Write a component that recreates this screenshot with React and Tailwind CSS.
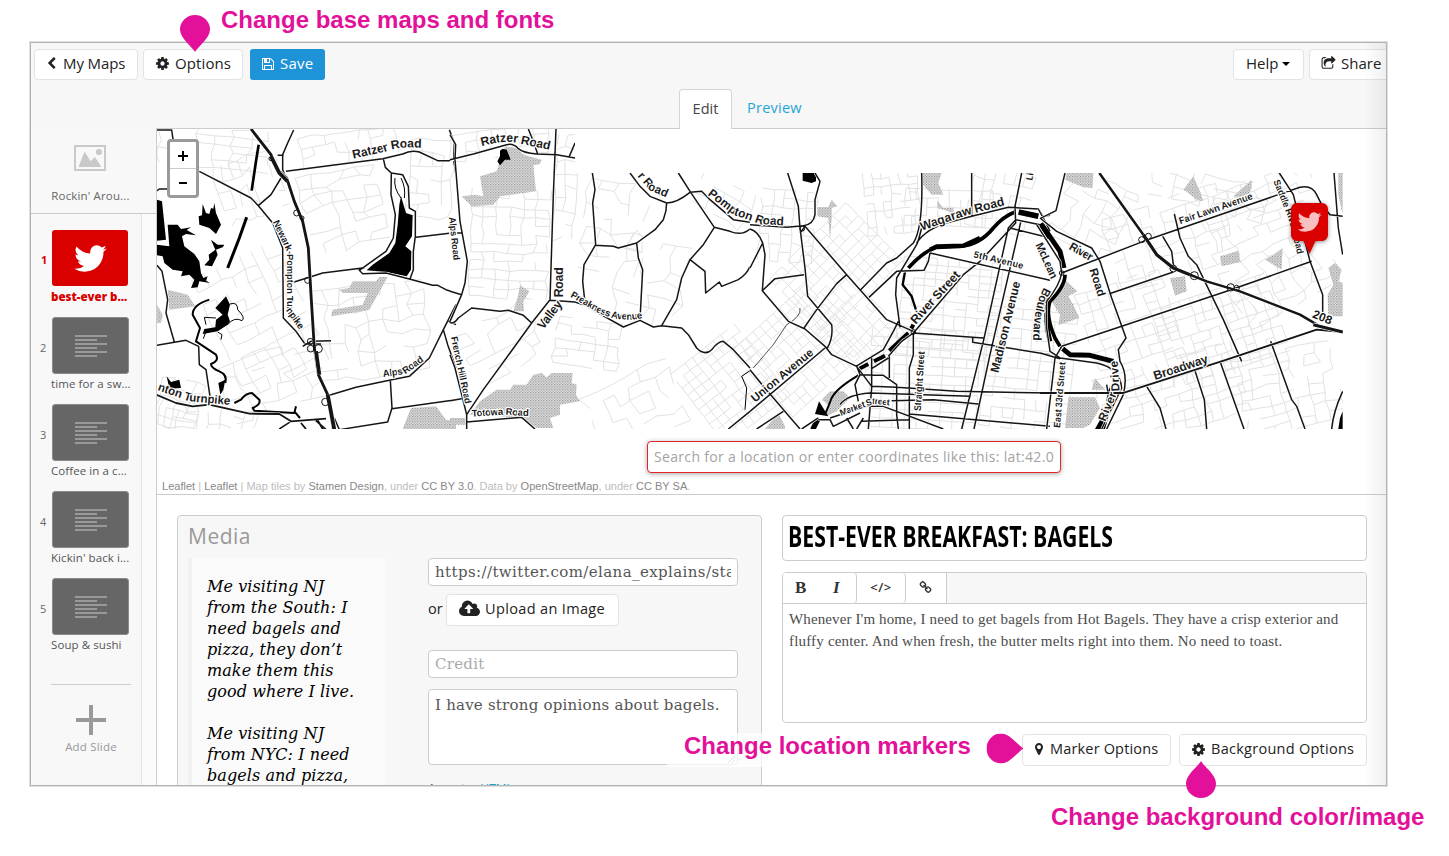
import React from "react";

const ICONS = {
  cog: "M1152 896q0-106-75-181t-181-75-181 75-75 181 75 181 181 75 181-75 75-181zm512-109v222q0 12-8 23t-20 13l-185 28q-19 54-39 91 35 50 107 138 10 12 10 25t-9 23q-27 37-99 108t-94 71q-12 0-26-9l-138-108q-44 23-91 38-16 136-29 186-7 28-36 28h-222q-14 0-24.500-8.500t-11.500-21.500l-28-184q-49-16-90-37l-141 107q-10 9-25 9-14 0-25-11-126-114-165-168-7-10-7-23 0-12 8-23 15-21 51-66.500t54-70.500q-27-50-41-99l-183-27q-13-2-21-12.500t-8-23.500v-222q0-12 8-23t19-13l186-28q14-46 39-92-40-57-107-138-10-12-10-24 0-10 9-23 26-36 98.500-107.500t94.500-71.500q13 0 26 10l138 107q44-23 91-38 16-136 29-186 7-28 36-28h222q14 0 24.500 8.500t11.500 21.500l28 184q49 16 90 37l142-107q9-9 24-9 13 0 25 10 129 119 165 170 7 8 7 22 0 12-8 23-15 21-51 66.500t-54 70.500q26 50 41 98l183 28q13 2 21 12.500t8 23.500z",
  save: "M512 1536h768v-384h-768v384zm896 0h128v-896q0-14-10-38.500t-20-34.500l-281-281q-10-10-34-20t-39-10v416q0 40-28 68t-68 28h-576q-40 0-68-28t-28-68v-416h-128v1280h128v-416q0-40 28-68t68-28h832q40 0 68 28t28 68v416zm-384-928v-320q0-13-9.500-22.500t-22.500-9.500h-192q-13 0-22.500 9.500t-9.500 22.500v320q0 13 9.500 22.500t22.500 9.500h192q13 0 22.500-9.500t9.500-22.500zm640 32v928q0 40-28 68t-68 28h-1344q-40 0-68-28t-28-68v-1344q0-40 28-68t68-28h928q40 0 88 20t76 48l280 280q28 28 48 76t20 88z",
  twitter: "M1684 408q-67 98-162 167 1 14 1 42 0 130-38 259.500t-115.500 248.500-184.500 210.500-258 146-323 54.500q-271 0-496-145 35 4 78 4 225 0 401-138-105-2-188-64.500t-114-159.500q33 5 61 5 43 0 85-11-112-23-185.500-111.500t-73.500-205.500v-4q68 38 146 41-66-44-105-115t-39-154q0-88 44-163 121 149 294.500 238.500t371.500 99.500q-8-38-8-74 0-134 94.500-228.500t228.500-94.500q140 0 236 102 109-21 205-78-37 115-142 178 93-10 186-50z",
  upload: "M1216 864q0-14-9-23l-352-352q-9-9-23-9t-23 9l-351 351q-10 12-10 24 0 14 9 23t23 9h224v352q0 13 9.500 22.500t22.500 9.500h192q13 0 22.500-9.500t9.500-22.500v-352h224q13 0 22.500-9.500t9.500-22.500zm640 288q0 159-112.500 271.500t-271.500 112.500h-1088q-185 0-316.500-131.500t-131.500-316.500q0-130 70-240t188-165q-2-30-2-43 0-212 150-362t362-150q156 0 285.500 87t188.500 231q71-62 166-62 106 0 181 75t75 181q0 76-41 138 130 31 213.500 135.500t83.500 238.500z",
  marker: "M1152 640q0-106-75-181t-181-75-181 75-75 181 75 181 181 75 181-75 75-181zm256 0q0 109-33 179l-364 774q-16 33-47.500 52t-67.500 19-67.500-19-46.500-52l-365-774q-33-70-33-179 0-212 150-362t362-150 362 150 150 362z",
  back: "M1427 301l-531 531 531 531q19 19 19 45t-19 45l-166 166q-19 19-45 19t-45-19l-742-742q-19-19-19-45t19-45l742-742q19-19 45-19t45 19l166 166q19 19 19 45t-19 45z",
  share: "M1472 989v259q0 119-84.500 203.500t-203.500 84.500h-832q-119 0-203.500-84.500t-84.500-203.500v-832q0-119 84.500-203.500t203.500-84.500h255q13 0 22.500 9.500t9.500 22.500q0 27-26 32-77 26-133 60-10 4-16 4h-112q-66 0-113 47t-47 113v832q0 66 47 113t113 47h832q66 0 113-47t47-113v-214q0-19 18-29 28-13 54-37 16-16 35-8 21 9 21 29zm237-496l-384 384q-18 19-45 19-12 0-25-5-39-17-39-59v-192h-160q-323 0-438 131-119 137-74 473 3 23-20 34-8 2-12 2-16 0-26-13-10-14-21-31t-39.500-68.500-49.500-99.500-38.500-114-17.500-122q0-49 3.500-91t14-90 28-88 47-81.500 68.500-74 94.500-61.500 124.500-48.500 159.500-30.500 196.500-11h160v-192q0-42 39-59 13-5 25-5 26 0 45 19l384 384q19 19 19 45t-19 45z",
  link: "M1520 1216q0-40-28-68l-208-208q-28-28-68-28-42 0-72 32 3 3 19 18.500t21.500 21.500 15 19 13 25.500 3.500 27.500q0 40-28 68t-68 28q-15 0-27.500-3.500t-25.500-13-19-15-21.500-21.500-18.500-19q-33 31-33 73 0 40 28 68l206 207q27 27 68 27 40 0 68-26l147-146q28-28 28-67zm-703-705q0-40-28-68l-206-207q-28-28-68-28-39 0-68 27l-147 146q-28 28-28 67 0 40 28 68l208 208q27 27 68 27 42 0 72-31-3-3-19-18.500t-21.500-21.500-15-19-13-25.500-3.500-27.500q0-40 28-68t68-28q15 0 27.500 3.500t25.500 13 19 15 21.500 21.500 18.500 19q33-31 33-73zm895 705q0 120-85 203l-147 146q-83 83-203 83-121 0-204-85l-206-207q-83-83-83-203 0-123 88-209l-88-88q-86 88-208 88-120 0-204-84l-208-208q-84-84-84-204t85-203l147-146q83-83 203-83 121 0 204 85l206 207q83 83 83 203 0 123-88 209l88 88q86-88 208-88 120 0 204 84l208 208q84 84 84 204z",
};

function Icon({ name, className, wide }) {
  return (
    <svg viewBox={wide ? "-64 0 1920 1792" : "0 0 1792 1792"} className={className} fill="currentColor">
      <path d={ICONS[name]} />
    </svg>
  );
}

/* Residential streets: a rotated grid with slight jitter and missing segments. */
function streetGrid([cx, cy, w, h, angle, dx, dy, keep, jitter, seed]) {
  let s = seed * 7919 + 13;
  const rnd = () => {
    s = (s * 16807) % 2147483647;
    return s / 2147483647;
  };
  const a = (angle * Math.PI) / 180;
  const cols = Math.round(w / dx);
  const rows = Math.round(h / dy);
  const pts = [];
  for (let r = 0; r <= rows; r++) {
    pts.push([]);
    for (let c = 0; c <= cols; c++) {
      const x = -w / 2 + c * dx + (rnd() - 0.5) * dx * jitter;
      const y = -h / 2 + r * dy + (rnd() - 0.5) * dy * jitter;
      pts[r].push(
        (cx + x * Math.cos(a) - y * Math.sin(a)).toFixed(1) + " " + (cy + x * Math.sin(a) + y * Math.cos(a)).toFixed(1)
      );
    }
  }
  let d = "";
  for (let r = 0; r <= rows; r++)
    for (let c = 0; c <= cols; c++) {
      if (c < cols && rnd() < keep) d += "M" + pts[r][c] + "L" + pts[r][c + 1];
      if (r < rows && rnd() < keep) d += "M" + pts[r][c] + "L" + pts[r + 1][c];
    }
  return d;
}

const GRIDS = [
  [215, 146, 110, 36, 5, 18, 8, 0.7, 0.3, 1],
  [252, 185, 60, 60, 70, 15, 9, 0.6, 0.5, 2],
  [345, 147, 90, 30, -8, 12, 10, 0.7, 0.4, 3],
  [345, 210, 80, 80, -12, 15, 11, 0.65, 0.6, 4],
  [430, 180, 44, 80, 4, 11, 13, 0.7, 0.4, 5],
  [260, 320, 90, 130, -25, 13, 13, 0.6, 0.25, 6],
  [370, 330, 110, 90, -8, 14, 13, 0.6, 0.5, 7],
  [180, 405, 46, 50, 12, 11, 10, 0.7, 0.4, 8],
  [275, 380, 100, 60, -20, 16, 12, 0.5, 0.5, 9],
  [210, 420, 100, 30, 8, 12, 9, 0.6, 0.4, 30],
  [510, 245, 80, 110, 2, 13, 9, 0.75, 0.3, 10],
  [500, 145, 100, 30, -6, 14, 9, 0.7, 0.3, 11],
  [565, 190, 20, 110, 3, 10, 13, 0.7, 0.4, 12],
  [505, 345, 80, 60, -30, 15, 11, 0.6, 0.5, 13],
  [590, 345, 70, 50, 8, 13, 8, 0.7, 0.3, 14],
  [615, 225, 60, 90, 4, 15, 13, 0.55, 0.6, 15],
  [655, 280, 70, 80, 15, 16, 14, 0.5, 0.6, 16],
  [635, 405, 90, 60, -25, 15, 13, 0.5, 0.5, 17],
  [720, 200, 50, 40, 30, 14, 12, 0.5, 0.4, 18],
  [730, 385, 80, 90, -38, 9, 9, 0.85, 0.08, 19],
  [790, 225, 60, 70, 5, 11, 9, 0.7, 0.3, 20],
  [835, 270, 80, 110, 45, 9, 9, 0.8, 0.1, 21],
  [800, 350, 100, 90, -42, 9, 9, 0.85, 0.08, 22],
  [860, 330, 60, 60, 45, 9, 9, 0.8, 0.1, 23],
  [890, 200, 50, 60, -5, 9, 8, 0.7, 0.3, 24],
  [950, 310, 100, 100, 5, 11, 7, 0.75, 0.12, 25],
  [925, 380, 110, 100, 3, 12, 9, 0.8, 0.08, 26],
  [950, 210, 90, 40, 2, 11, 9, 0.7, 0.2, 27],
  [1030, 365, 90, 130, 6, 11, 10, 0.75, 0.12, 28],
  [1000, 200, 60, 60, 12, 10, 12, 0.7, 0.2, 29],
  [1090, 215, 60, 80, 25, 13, 11, 0.6, 0.5, 31],
  [1170, 240, 120, 80, -18, 12, 11, 0.65, 0.3, 32],
  [1130, 320, 90, 80, -18, 11, 10, 0.7, 0.2, 33],
  [1220, 330, 120, 80, -18, 10, 9, 0.75, 0.15, 34],
  [1170, 395, 140, 70, -16, 13, 9, 0.7, 0.3, 35],
  [1290, 390, 100, 80, -14, 14, 10, 0.65, 0.35, 36],
  [1260, 205, 110, 50, -20, 14, 9, 0.65, 0.35, 37],
  [1280, 280, 100, 70, -30, 13, 11, 0.6, 0.5, 38],
  [1210, 190, 120, 30, 15, 13, 11, 0.6, 0.4, 39],
];

/* Each sheet is drawn at three times the map's resolution, with its own origin. */
const SHEETS = [
  {
    x: 156,
    parks: "M35 485L95 500L118 535L40 545ZM3 530L20 560L15 585H3ZM550 485L580 480L590 460L660 460L670 447H695L640 545L620 550L525 565L530 545L620 530L635 495L560 495ZM765 840L840 835L870 875L900 880V903H740Z",
    water: "M3 215L18 220L30 335L3 338ZM3 350L40 355L35 290L65 290L75 303L105 298L92 306L120 322L90 318L78 325L85 355L115 378L130 400L135 435L142 450L155 445L150 458L162 465L130 460L125 478L105 480L115 455L100 440L75 445L80 430L50 425L25 405L20 385L3 382ZM140 228L150 255L160 258L165 240L172 242L175 225L180 255L195 290L180 318L160 300L130 290L128 265L138 262ZM165 335L185 350L205 350L200 358L180 365L185 380L168 415L145 412L160 395L158 380L178 365ZM178 540L210 505L222 530L215 560L222 580L215 590L185 610L140 618L145 603L178 598L180 575L200 560ZM32 745L45 762L70 755L75 780L40 782ZM187 765L208 755L202 785L193 800ZM735 205L750 255L770 262L768 325L748 355L766 370L765 425L752 445L690 432L632 427L650 410L700 375L718 345L725 290L730 230Z",
    rivers: [["M160 515Q110 530 110 560L132 600L120 640Q150 660 180 680Q190 700 165 708Q165 720 190 730Q215 740 208 765", 6], ["M235 825L255 815Q270 795 288 795L310 815Q315 830 290 840L295 848L415 855L420 835M415 850L432 870", 6], ["M308 50L300 100L287 188", 8], ["M272 268L250 330L215 420", 9], ["M222 528Q245 520 245 545Q270 570 258 578Q235 565 215 590M180 570L145 568L150 590M150 610L142 632M185 612L198 620L195 635", 3], ["M717 150Q712 180 735 210M735 150Q750 180 745 210", 3]],
    roads: [["M0 6H47L52 40M130 130L285 210L307 233L350 285L380 360L382 570L420 610L445 645M413 6L395 45L380 80V125L388 145M307 233L345 200L375 150M390 130L680 92L740 78Q765 65 790 72L845 98H880L900 90M682 92L688 118L706 135L705 200L718 260L712 330L690 370L655 395L610 427L620 437L690 435L760 453L830 472H845L870 485L900 495M706 135L740 140L757 175L760 240L778 250V325L772 370V425L762 453M780 328L880 316M412 463L460 448L500 435L625 419M0 190L10 183H36M3 412L18 430L35 515L30 555L55 642M3 652L90 637L128 655L130 710L150 725L162 805M370 903L405 880M520 802L600 778L700 757L760 745L820 690L862 605L900 530M703 757L708 840L695 882L550 905L535 870M708 842L900 815M862 605L875 650L900 720M878 580L900 590M440 655L465 640L525 638M445 648H495M880 5L895 45L893 98L900 140M365 82H383", 4], ["M0 800L60 825L110 835L160 830L280 857L370 858L405 880L510 872M435 885L450 903M480 878L510 905M485 877L500 903", 5], ["M285 3L345 80L365 125L392 150L415 220L440 280L457 360L465 500L475 660L487 740L515 800L532 905", 8], ["M345 85L370 135L395 160M480 670L490 740M515 800L535 905", 11]],
    rings: [[345, 92, 6], [422, 255, 9], [455, 457, 9], [463, 640, 9], [487, 662, 12], [464, 662, 10], [508, 822, 11], [438, 270, 6]],
  },
  {
    x: 450,
    parks: "M165 55L205 62L220 80L275 95L270 108L250 112L258 190L150 205L130 230L65 235L35 205L75 200L100 205L90 145L140 130ZM210 472L238 490L220 520L222 550H190L205 500ZM250 740L275 735L290 748L305 735H368L365 765L380 770L378 800L390 820L330 830V860L300 870L310 900H260L215 868L60 860L90 820L140 785H180L190 770H230ZM0 870H45L50 890H0Z",
    water: "M150 68L158 62L170 65L182 95L165 95L150 112L142 100L150 85Z",
    rivers: [["M900 728L875 745L890 780L885 845", 3]],
    roads: [["M0 95L70 78L170 50Q190 45 205 62Q220 75 260 78L320 80L375 90M0 20L17 50L15 95L30 280L52 400L45 465L35 500L0 580M318 3L310 200L300 515L245 585L180 675L100 785L50 860M300 517L375 522L400 530L520 597L570 577L610 597L635 593L695 600L715 620L740 660Q765 685 785 665Q805 640 820 640L850 665L900 720M235 3L250 40L263 78M375 45L358 85M0 490L35 500M0 583Q10 590 25 570L65 540L150 550L175 547L220 562L245 585M0 680L15 720L50 860V905M50 882L215 868L255 903M0 818L35 812M20 315H37M427 135L435 185L428 225L437 350L402 410L398 460L405 525M435 352L490 355L505 360L560 345L615 305L640 275Q650 250 650 225M560 345L565 390L578 425L570 575M540 135L570 175L600 205L650 225Q680 225 720 193L755 190L780 215L850 275L900 283M685 135L722 193L793 298L760 350L720 395L695 450L680 515L635 593M793 298L840 310Q875 325 900 303M720 395L765 430L767 495L808 462L815 475L865 455Q890 440 900 415M835 903L900 850", 4]],
    rings: [],
  },
  {
    x: 750,
    parks: "M515 135H575L565 165L580 200H545L515 165ZM245 215L262 235L245 240V270L240 335L235 270L202 265V237H235ZM562 218L580 240H610L612 255L562 240ZM240 790H280L300 810L260 850L230 865L235 830L215 815ZM85 855L105 895V903H45Z",
    water: "M158 135H198V160L185 165L158 158ZM207 820L235 865L195 858Z",
    rivers: [["M475 420Q520 370 560 358L630 355Q690 350 730 300Q760 265 795 252", 11], ["M540 365L560 355L640 353L690 330", 13], ["M806 252L865 265", 17], ["M872 287L900 330", 15], ["M465 432L458 470L485 505L500 552", 7], ["M490 590L484 602M475 615L418 668M405 683L372 700M355 708L328 722", 12], ["M325 742Q260 780 245 810L225 860", 6], ["M203 875L188 905", 16], ["M150 540Q155 565 110 590L70 650L10 720", 2], ["M900 500Q880 560 900 640", 14]],
    roads: [["M113 135L145 235L150 300L165 420L173 505L245 590Q250 630 232 660M195 135L210 160L195 215V260Q190 290 160 293L110 298L0 290M150 315L165 295L290 440L410 575L490 610M0 303Q25 310 38 345L45 380L37 488L115 580L165 603L225 655L245 680L320 715L365 775L440 778L620 790L900 795M38 345L0 420M37 488L75 452L162 440M160 603L200 545L260 467L290 440M332 485L410 405L440 390L490 345Q520 300 515 135M357 508L440 430L522 427L535 400L540 375L900 457M500 350L440 450L437 500L450 598M515 300Q505 340 500 350M500 345Q530 300 600 282L665 265L775 238L865 243L880 265L900 262M665 135V265M815 135L795 235L797 285L690 400L640 440L490 615M797 275L775 300L700 640L635 903M812 283L720 680L672 903M797 275L870 290M780 300L880 325M415 685L455 640L490 615L700 630M318 715L400 665L430 610L445 580M490 615V680L478 720V903M668 630V643L900 680M0 850L225 660M0 725L40 775L150 903M20 903L100 850M320 715L330 740L315 770L325 820M330 740L400 742L440 770V860L445 903M365 690V780L355 903M418 685V750M365 722L415 690M270 830Q290 800 360 795L660 805M240 870L350 835L400 835L580 903M425 818L550 815L685 828M478 858L900 895M335 880L478 875M205 875H240L250 895L330 855M290 870L310 903M320 903L340 870M155 903L205 870M660 805L655 820", 4], ["M865 243L888 285L900 310", 4]],
    rings: [[157, 302, 7], [490, 612, 7]],
  },
  {
    x: 1040,
    parks: "M80 135H160L158 180L130 178L75 155ZM460 145L480 190L490 220L470 215L445 195L430 185ZM635 155V180L620 215L580 205ZM540 385L595 368L602 402L545 415ZM675 395L700 380L728 360L725 425L700 410ZM390 450L435 445L440 490L405 503ZM865 420L885 405L905 425L895 460L908 465V565H865L863 500L880 470ZM895 135H908V260L895 200ZM70 450L112 490L85 505L100 530L118 570L55 592L60 560L35 520L75 470ZM85 808H165L180 840L150 890L130 900H75ZM165 750L195 785L155 785Z",
    water: "M165 903L205 830L215 790L225 800L195 903ZM900 870L908 850V903H895Z",
    rivers: [["M5 290L60 370L72 420", 15], ["M75 440Q75 475 30 520Q15 560 45 630L60 655", 11], ["M68 662L90 680L150 682L220 700", 15]],
    roads: [["M75 135L48 248L0 272M0 270L50 310L155 360L180 400L215 510L258 630L235 665L240 700Q265 740 250 800L200 903M65 435L310 340L715 200L780 178Q815 170 830 200L845 230L870 260L908 265M208 497L400 432M65 655L245 595L560 490L815 400M403 258L420 330L445 385L470 410L550 575L605 700M368 325L395 370L400 410L420 430M718 135L760 200L810 400L848 500V560M882 135L895 300L908 380M320 775L360 840L378 903M465 728L493 815L500 903M540 700L612 903M692 640L755 815L770 835L795 903M908 790Q880 850 875 903M-10 290L60 400L65 435Q60 470 20 520V600L30 670L60 690L170 705Q240 720 245 780L185 903M65 655L45 690L20 903M0 675L60 692M15 520L-10 590V640M200 770L205 800M210 780L200 820", 4], ["M0 795H250L560 695L830 605L908 612", 5], ["M178 135L310 320L350 380L400 420L500 460L600 490L780 560L840 595L908 612", 7], ["M310 320L350 380L400 420L450 440M820 590L908 612", 9]],
    rings: [[305, 335, 9], [325, 325, 9], [463, 443, 12], [572, 478, 11], [400, 422, 10], [65, 435, 7], [590, 480, 8]],
  },
];

/* [sheet, text, baseline, font size, drawn length] */
const LABELS = [
  [0, "Ratzer Road", "M592 92L690 70Q740 52 830 62", 37, 208],
  [0, "Newark-Pompton Turnpike", "M350 282L392 370L392 550L440 620", 29, 345],
  [0, "Alps Road", "M682 747L750 737L830 680", 29, 135],
  [0, "nton Turnpike", "M4 786L100 820L250 833", 35, 224],
  [1, "Ratzer Road", "M95 55Q175 32 215 48L330 72", 37, 208],
  [1, "Alps Road", "M-3 268L14 430", 28, 130],
  [1, "French Hill Road", "M3 628L50 850", 28, 205],
  [1, "Totowa Road", "M66 866L160 860L260 866", 29, 170],
  [1, "Valley", "M280 606L360 500", 37, 97],
  [1, "Road", "M340 508V400", 37, 90],
  [1, "Preakness Avenue", "M360 506L440 552Q520 592 610 562", 29, 234],
  [1, "r Road", "M562 145L598 186L680 222", 35, 110],
  [1, "Pompton Road", "M772 200L850 260L930 288L1030 294", 36, 254],
  [2, "Wagaraw Road", "M515 308L650 262L800 222", 37, 262],
  [2, "5th Avenue", "M670 388L850 430", 28, 152],
  [2, "River Street", "M497 590L660 412", 37, 200],
  [2, "Madison Avenue", "M745 736L818 435", 36, 280],
  [2, "Straight Street", "M512 850L526 640", 29, 180],
  [2, "Market Street", "M273 864L370 828L450 835", 27, 152],
  [2, "Union Avenue", "M15 824L220 655", 35, 230],
  [2, "Li", "M847 158L857 100", 28, 22],
  [3, "McLean", "M-14 350L40 470", 34, 115],
  [3, "Boulevard", "M12 478Q-24 540 -20 660", 35, 165],
  [3, "River", "M85 362L165 408", 35, 76],
  [3, "Road", "M148 425L185 540", 35, 87],
  [3, "Fair Lawn Avenue", "M421 289L670 202", 29, 232],
  [3, "Saddle River Road", "M700 160L745 270L780 410", 28, 232],
  [3, "208", "M815 568L900 602", 36, 60],
  [3, "Broadway", "M345 756L540 692", 37, 170],
  [3, "East 33rd Street", "M60 900L80 660", 28, 198],
  [3, "River Drive", "M196 882L238 780L230 650", 35, 192],
];

function StreetMap() {
  return (
    <svg viewBox="157 129 1186 300" className="block h-[300px] w-[1186px]">
      <defs>
        <clipPath id="tiles">
          <path d="M157 129H575V173H1343V429H157Z" />
        </clipPath>
        <pattern id="dots" width="8" height="8" patternUnits="userSpaceOnUse">
          <rect width="8" height="8" fill="#dfdfdf" />
          <rect x="0" y="0" width="3" height="3" fill="#858585" />
          <rect x="4" y="4" width="3" height="3" fill="#858585" />
        </pattern>
      </defs>
      <g clipPath="url(#tiles)">
        <g fill="none" stroke="#e2e2e2" strokeWidth="1">
          {GRIDS.map((g) => (
            <path key={g[9]} d={streetGrid(g)} />
          ))}
        </g>
        {SHEETS.map((s) => (
          <g key={s.x} transform={`translate(${s.x} 128) scale(0.33333)`} fill="none" strokeLinejoin="round">
            <path d={s.parks} fill="url(#dots)" />
            <path d={s.water} fill="#000" />
            {s.rivers.map(([d, w]) => (
              <path key={d} d={d} stroke="#000" strokeWidth={w} />
            ))}
            {s.roads.map(([d, w]) => (
              <g key={d}>
                <path d={d} stroke="#fff" strokeWidth={w + 4} />
                <path d={d} stroke="#151515" strokeWidth={w + 0.5} />
              </g>
            ))}
            {s.rings.map(([cx, cy, r]) => (
              <circle key={cx + "-" + cy} cx={cx} cy={cy} r={r} stroke="#151515" strokeWidth="3" />
            ))}
          </g>
        ))}
        {LABELS.map(([sheet, text, d, size, len], i) => (
          <g key={i} transform={`translate(${SHEETS[sheet].x} 128) scale(0.33333)`}>
            <path id={"label" + i} d={d} fill="none" />
            <text
              fontFamily="Liberation Sans, Arial, sans-serif"
              fontSize={size}
              fontWeight="bold"
              fill="#1c1c1c"
              stroke="#fff"
              strokeWidth="7"
              strokeLinejoin="round"
              paintOrder="stroke"
              textLength={len}
            >
              <textPath href={"#label" + i} textLength={len}>
                {text}
              </textPath>
            </text>
          </g>
        ))}
      </g>
    </svg>
  );
}

const btn = "flex h-[31px] items-center rounded-[4px] border border-[#e3e3e3] bg-white pb-[2px] text-[15px] text-[#222] whitespace-nowrap";

function Slide({ n, label, active }) {
  return (
    <div className="h-[87px]">
      <div className="flex items-center">
        <span className={active ? "w-[21px] pt-[5px] pl-[10px] text-[11px] font-bold text-[#d90000]" : "w-[21px] pt-[5px] pl-[9px] text-[11px] text-[#666]"}>{n}</span>
        <div className={active ? "flex h-[56px] w-[76px] items-center justify-center rounded-[3px] bg-[#da0000]" : "flex h-[57px] w-[77px] items-center justify-center rounded-[3px] border border-[#8b8b8b] bg-[#666]"}>
          {active ? (
            <Icon name="twitter" className="h-[37px] w-[37px] text-white" />
          ) : (
            <svg viewBox="0 0 32 22" className="h-[22px] w-[32px]" fill="#999">
              <path d="M0 0h32v2H0zM0 4h22v2H0zM0 8h32v2H0zM0 12h22v2H0zM0 16h32v2H0zM0 20h22v2H0z" />
            </svg>
          )}
        </div>
      </div>
      <div className={active ? "pl-[20px] pt-[2px] text-[11.500px] leading-[18px] font-extrabold text-[#da0000]" : "pl-[20px] pt-[1px] text-[11.500px] leading-[18px] tracking-[0.080px] text-[#555]"}>{label}</div>
    </div>
  );
}

function Sidebar() {
  return (
    <div className="flex w-[126px] shrink-0 flex-col border-r border-[#ccc] bg-[#f8f8f8]">
      <div className="flex h-[85px] flex-col items-center border-b border-[#ccc] pr-[6px] pt-[16px]">
        <svg viewBox="0 0 32 26" className="mr-[2px] h-[26px] w-[32px]">
          <rect x="1" y="1" width="30" height="24" fill="none" stroke="#c9c9c9" strokeWidth="2" />
          <path d="M4.500 22L10.500 6.500L16.500 16L21 12L27.500 22Z" fill="#c9c9c9" />
          <circle cx="25" cy="7" r="3.100" fill="#c9c9c9" />
        </svg>
        <div className="pt-[16px] text-[11.500px] leading-[18px] tracking-[0.150px] text-[#666]">Rockin' Arou...</div>
      </div>
      <div className="flex flex-1">
        <div className="w-[111px] border-r border-[#e2e2e2] pt-[16px]">
          <Slide n="1" label="best-ever b..." active />
          <Slide n="2" label="time for a sw..." />
          <Slide n="3" label="Coffee in a c..." />
          <Slide n="4" label="Kickin' back i..." />
          <Slide n="5" label="Soup & sushi" />
          <div className="ml-[20px] mt-[19px] flex w-[80px] flex-col items-center border-t border-[#ccc] pt-[20px]">
            <svg viewBox="0 0 30 30" className="h-[30px] w-[30px]" fill="#999">
              <path d="M13 0h4v13h13v4H17v13h-4V17H0v-4h13z" />
            </svg>
            <div className="pt-[3px] text-[11.500px] leading-[18px] tracking-[0.200px] text-[#999]">Add Slide</div>
          </div>
        </div>
        <div className="flex-1 bg-[#fbfbfb]" />
      </div>
    </div>
  );
}

function MapPane() {
  return (
    <div className="relative h-[366px] shrink-0 border-b border-[#ccc] bg-white">
      <StreetMap />
      <div className="absolute top-[10px] left-[10px] w-[32px] rounded-[4px] border-[3px] border-[#9a9a9a] bg-white">
        <div className="flex h-[27px] items-center justify-center border-b border-[#ccc] pt-[2px]">
          <svg viewBox="0 0 10 10" className="h-[10px] w-[10px]"><path d="M5 0V10M0 5H10" stroke="#000" strokeWidth="2" /></svg>
        </div>
        <div className="flex h-[26px] items-center justify-center pt-[2px]">
          <svg viewBox="0 0 10 10" className="h-[10px] w-[10px]"><path d="M1 5H9" stroke="#000" strokeWidth="2" /></svg>
        </div>
      </div>
      <svg viewBox="0 0 50 62" className="absolute top-[68px] left-[1127px] h-[62px] w-[50px] drop-shadow-[0_1px_2px_rgba(0,0,0,0.45)]">
        <path d="M13 6h25a6 6 0 0 1 6 6v26a6 6 0 0 1-6 6h-6.500L25.500 57L19.500 44H13a6 6 0 0 1-6-6V12a6 6 0 0 1 6-6z" fill="#da0000" />
        <g transform="translate(12 11.500) scale(0.0151)"><path d={ICONS.twitter} fill="#f8c0c0" /></g>
      </svg>
      <div className="absolute top-[312px] left-[490px] flex h-[32px] w-[414px] items-center rounded-[4px] border border-[#e02626] bg-white pb-[2px] pl-[6px] text-[14px] whitespace-nowrap text-[#a3a3a3] shadow-[0_1px_5px_rgba(0,0,0,0.35)]">
        <span className="tracking-[0.330px]">Search for a location or enter coordinates like this: lat:42.0</span>
      </div>
      <div className="absolute top-[350px] left-[5px] font-['Liberation_Sans',Arial,sans-serif] text-[11px] leading-[15px] tracking-[0.020px] whitespace-nowrap text-[#bdbdbd]">
        <span className="text-[#888]">Leaflet</span> | <span className="text-[#888]">Leaflet</span> | Map tiles by <span className="text-[#888]">Stamen Design</span>, under <span className="text-[#888]">CC BY 3.0</span>. Data by <span className="text-[#888]">OpenStreetMap</span>, under <span className="text-[#888]">CC BY SA</span>.
      </div>
    </div>
  );
}

function MediaPanel() {
  const field = "rounded-[4px] border border-[#ccc] bg-white px-[6px] text-[15px] text-[#555]";
  return (
    <div className="h-[290px] w-[585px] shrink-0 rounded-t-[4px] border border-[#ccc] bg-[#f7f7f7]">
      <div className="h-[42px] pt-[5px] pl-[10px] text-[21px] leading-[30px] tracking-[0.500px] text-[#999]">Media</div>
      <div className="flex font-['DejaVu_Serif',serif]">
        <div className="ml-[10px] h-[240px] w-[199px] border-l-[4px] border-[#f1f1f1] bg-[#fafafa] pt-[18px] pl-[15px] text-[16px] leading-[21px] tracking-[0.080px] whitespace-nowrap text-black italic">
          <div>Me visiting NJ</div>
          <div>from the South: I</div>
          <div>need bagels and</div>
          <div>pizza, they don’t</div>
          <div>make them this</div>
          <div>good where I live.</div>
          <div className="h-[21px]" />
          <div>Me visiting NJ</div>
          <div>from NYC: I need</div>
          <div>bagels and pizza,</div>
        </div>
        <div className="ml-[41px] w-[310px]">
          <div className={`flex h-[28px] items-center ${field}`}>
            <div className="overflow-hidden tracking-[0.400px] whitespace-nowrap">https://twitter.com/elana_explains/status</div>
          </div>
          <div className="mt-[8px] flex h-[32px] items-center font-['Open_Sans','Noto_Sans',sans-serif] text-[14.500px] text-[#222]">
            <span className="w-[18px] pb-[2px]">or</span>
            <div className="flex h-[32px] w-[173px] items-center rounded-[4px] border border-[#e3e3e3] bg-white pb-[2px] pl-[12px] whitespace-nowrap">
              <Icon name="upload" wide className="mr-[5px] h-[20px] w-[21px]" />
              <span className="tracking-[0.350px]">Upload an Image</span>
            </div>
          </div>
          <div className={`mt-[24px] flex h-[28px] items-center ${field}`}>
            <span className="tracking-[0.250px] text-[#aaa]">Credit</span>
          </div>
          <div className={`mt-[11px] flex h-[76px] justify-between pt-[5px] ${field}`}>
            <span className="leading-[20px] tracking-[0.220px] whitespace-nowrap">I have strong opinions about bagels.</span>
            <svg viewBox="0 0 8 8" className="-mr-[4px] mb-[1px] h-[8px] w-[8px] shrink-0 self-end"><path d="M1 8L8 1M5 8L8 5" stroke="#999" /></svg>
          </div>
          <div className="mt-[15px] font-['Open_Sans','Noto_Sans',sans-serif] text-[12px] leading-[17px] text-[#444]">
            Accepts <span className="pl-[6px] text-[#1d9fd1]">HTML</span>
          </div>
        </div>
      </div>
    </div>
  );
}

function HeadlinePanel() {
  return (
    <div className="flex w-[585px] shrink-0 flex-col">
      <div className="h-[46px] rounded-[4px] border border-[#ccc] bg-white pl-[5px]">
        <div className="w-[500px] origin-left scale-x-[0.759] text-[28px] leading-[40px] font-bold whitespace-nowrap text-black">BEST-EVER BREAKFAST: BAGELS</div>
      </div>
      <div className="mt-[11px] h-[151px] overflow-hidden rounded-[4px] border border-[#ccc] bg-white font-['Liberation_Serif',serif]">
        <div className="flex h-[31px] border-b border-[#ccc] bg-[#f7f7f7] text-[17px] text-[#333]">
          <div className="flex w-[74px] items-center rounded-r-[4px] border-r border-[#ccc] bg-white pb-px">
            <span className="w-[38px] pl-[12px] font-bold">B</span>
            <span className="pl-[12px] font-bold italic">I</span>
          </div>
          <div className="flex w-[49px] items-center justify-center rounded-r-[4px] border-r border-[#ccc] bg-white pb-px font-['Open_Sans',sans-serif] text-[13px] font-semibold tracking-[0.500px]">&lt;/&gt;</div>
          <div className="flex w-[41px] items-center justify-center border-r border-[#ccc] bg-white pr-[2px] pb-[2px]">
            <Icon name="link" className="h-[13px] w-[13px]" />
          </div>
        </div>
        <div className="pt-[4px] pl-[6px] text-[15px] leading-[22px] tracking-[0.120px] whitespace-nowrap text-[#4c4c4c]">
          <div>Whenever I'm home, I need to get bagels from Hot Bagels. They have a crisp exterior and</div>
          <div className="tracking-[0.180px]">fluffy center. And when fresh, the butter melts right into them. No need to toast.</div>
        </div>
      </div>
      <div className="mt-[11px] flex justify-end gap-[8px] text-[14.500px] text-[#222]">
        <div className="flex h-[32px] w-[149px] items-center rounded-[4px] border border-[#e3e3e3] bg-white pb-[2px] pl-[9px] whitespace-nowrap">
          <Icon name="marker" className="mr-[4px] h-[14px] w-[14px]" />
          <span className="tracking-[0.170px]">Marker Options</span>
        </div>
        <div className="flex h-[32px] w-[188px] items-center rounded-[4px] border border-[#e3e3e3] bg-white pb-[2px] pl-[11px] whitespace-nowrap">
          <Icon name="cog" className="mr-[5px] h-[15px] w-[15px]" />
          <span className="tracking-[0.270px]">Background Options</span>
        </div>
      </div>
    </div>
  );
}

function Callout({ children, className }) {
  return <div className={`absolute font-['Liberation_Sans',Arial,sans-serif] text-[24px] leading-[28px] font-bold whitespace-nowrap text-[#e3109a] ${className}`}>{children}</div>;
}

function Drop({ className }) {
  return (
    <svg viewBox="0 0 30 37" className={`absolute h-[37px] w-[30px] ${className}`}>
      <path d="M15 37C12 31.500 0 23.500 0 14.500A15 14.500 0 0 1 30 14.500C30 23.500 18 31.500 15 37Z" fill="#e3109a" />
    </svg>
  );
}

export default function App() {
  return (
    <div className="relative h-[856px] w-[1449px] overflow-hidden bg-white pt-[42px] pl-[30px] font-['Open_Sans','Noto_Sans',sans-serif]">
      <div className="relative flex h-[744px] w-[1357px] flex-col overflow-hidden border border-[#b3b5b5] bg-white shadow-[0_0_0_1px_#dfdfdf]">
        <header className="flex h-[86px] shrink-0 flex-col justify-between bg-[#f7f7f7]">
          <div className="flex pt-[6px] pl-[3px]">
            <div className={`w-[104px] pl-[10px] ${btn}`}>
              <Icon name="back" className="mr-[5px] h-[13px] w-[13px]" />
              <span className="-tracking-[0.100px]">My Maps</span>
            </div>
            <div className={`ml-[5px] w-[100px] pl-[11px] ${btn}`}>
              <Icon name="cog" className="mr-[5px] h-[15px] w-[15px]" />
              <span className="tracking-[0.100px]">Options</span>
            </div>
            <div className="ml-[7px] flex h-[31px] w-[75px] items-center rounded-[3px] bg-[#1e93d7] pb-[2px] pl-[11px] text-[15px] text-white">
              <Icon name="save" className="mr-[5px] h-[14px] w-[14px]" />
              <span className="tracking-[0.200px]">Save</span>
            </div>
            <div className={`ml-auto w-[71px] shrink-0 pl-[12px] ${btn}`}>
              <span>Help</span>
              <svg viewBox="0 0 8 4" className="ml-[4px] h-[4px] w-[8px]"><path d="M0 0H8L4 4Z" /></svg>
            </div>
            <div className={`-mr-[16px] ml-[5px] w-[93px] shrink-0 pl-[11px] ${btn}`}>
              <Icon name="share" className="mr-[5px] h-[15px] w-[15px]" />
              <span>Share</span>
            </div>
          </div>
          <div className="flex h-[40px] items-stretch text-[14.500px]">
            <div className="w-[125px]" />
            <div className="w-[523px] border-b border-[#ccc]" />
            <div className="flex w-[53px] items-center justify-center rounded-t-[4px] border border-b-0 border-[#d5d5d5] bg-white pb-[2px] text-[#444]">Edit</div>
            <div className="flex flex-1 items-center border-b border-[#ccc] pl-[15px] pb-px tracking-[0.250px] text-[#1fa5d6]">Preview</div>
          </div>
        </header>
        <div className="flex flex-1 overflow-hidden">
          <Sidebar />
          <main className="flex flex-1 flex-col">
            <MapPane />
            <div className="flex gap-[20px] pt-[20px] pl-[20px]">
              <MediaPanel />
              <HeadlinePanel />
            </div>
          </main>
        </div>
        <div className="absolute top-0 right-0 h-full w-[22px] bg-linear-to-r from-transparent to-black/6" />
      </div>
      <Callout className="top-[6px] left-[221px]">Change base maps and fonts</Callout>
      <Drop className="top-[15px] left-[180px]" />
      <div className="absolute top-[733px] left-[667px] h-[34px] w-[319px] bg-white/70" />
      <Callout className="top-[732px] left-[684px]">Change location markers</Callout>
      <Drop className="top-[730px] left-[990px] -rotate-90" />
      <Drop className="top-[761px] left-[1186px] rotate-180" />
      <Callout className="top-[803px] left-[1051px]">Change background color/image</Callout>
    </div>
  );
}
